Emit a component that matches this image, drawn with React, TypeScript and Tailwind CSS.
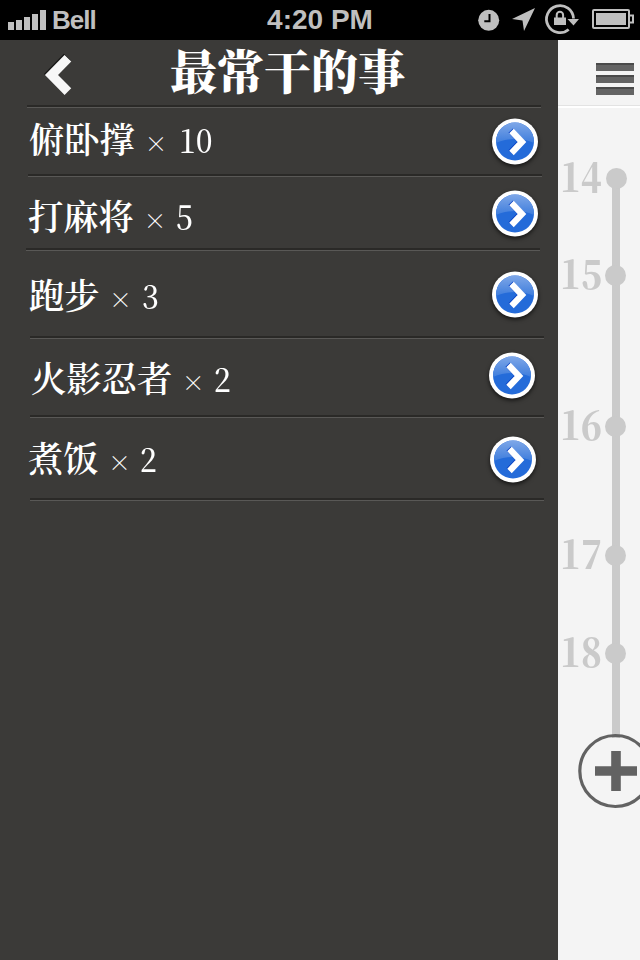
const serif = 'font-["Noto_Serif_CJK_SC","Noto_Serif_SC","Liberation_Serif","Noto_Sans_CJK_SC",serif]';

type Row = {
  name: string;
  count: number;
  row: string;
  label: string;
  num: string;
  button: string;
  line: string;
};

const rows: Row[] = [
  { name: '俯卧撑', count: 10, row: 'h-[69px]', label: 'pl-[29px] mt-[12px]', num: 'ml-[11px]', button: 'mt-[10px] mr-[20px]', line: 'ml-[28px] mr-[16px]' },
  { name: '打麻将', count: 5, row: 'h-[74px]', label: 'pl-[28px] mt-[20px]', num: 'ml-[9px]', button: 'mt-[13px] mr-[20px]', line: 'ml-[26px] mr-[18px]' },
  { name: '跑步', count: 3, row: 'h-[88px]', label: 'pl-[29px] mt-[25px]', num: 'ml-[9px]', button: 'mt-[20px] mr-[20px]', line: 'ml-[30px] mr-[14px]' },
  { name: '火影忍者', count: 2, row: 'h-[79px]', label: 'pl-[31px] mt-[20px]', num: 'ml-[9px]', button: 'mt-[13px] mr-[23px]', line: 'ml-[30px] mr-[14px]' },
  { name: '煮饭', count: 2, row: 'h-[83px]', label: 'pl-[28px] mt-[21px]', num: 'ml-[8px]', button: 'mt-[18px] mr-[22px]', line: 'ml-[30px] mr-[14px]' },
];

const days = [
  { day: 14, place: 'mt-[50px]', dot: 'mr-[13px]' },
  { day: 15, place: 'mt-[57px]', dot: 'mr-[14px]' },
  { day: 16, place: 'mt-[111px]', dot: 'mr-[14px]' },
  { day: 17, place: 'mt-[89px]', dot: 'mr-[14px]' },
  { day: 18, place: 'mt-[58px]', dot: 'mr-[14px]' },
];

function Groove({ className }: { className: string }) {
  return <div className={`h-[3px] shrink-0 border-b border-[#595856] bg-[#2a2927] ${className}`} />;
}

function StatusBar() {
  return (
    <header className='grid h-10 w-full shrink-0 grid-cols-3 items-center bg-black font-["Liberation_Sans",sans-serif] text-[28px] font-bold text-[#bfbfbf]'>
      <div className="flex items-center pl-2">
        <svg width="38" height="20" viewBox="0 0 38 20" fill="currentColor">
          <path d="M0 12h6v8H0zM8 10h6v10H8zM16 7h6v13h-6zM24 4h6v16h-6zM32 0h6v20h-6z" />
        </svg>
        <span className="ml-[6px] text-[26px] leading-9 tracking-[-1px]">Bell</span>
      </div>
      <span className="whitespace-nowrap text-center leading-9">4:20 PM</span>
      <div className="flex items-center justify-end pr-[6px]">
        <svg width="158" height="40" viewBox="476 0 158 40" fill="none">
          <circle cx="488.7" cy="20.3" r="10.5" fill="#bfbfbf" />
          <path d="M489.5 14v7.3h-5.2" stroke="#000" strokeWidth="2" />
          <path d="M535 8 524 31l-1.5-10.5L512 19z" fill="#bfbfbf" />
          <path d="M573.5 18.5A13.5 13.5 0 1 0 568.7 29.5" stroke="#bfbfbf" strokeWidth="2.8" />
          <path d="M567.5 19h11.5l-5.5 6.5z" fill="#bfbfbf" />
          <path d="M554 17.5h12V25h-12z" fill="#bfbfbf" />
          <path d="M556.7 18v-3a3.2 3.2 0 0 1 6.4 0v3" stroke="#bfbfbf" strokeWidth="2" />
          <rect x="593" y="10" width="36" height="18" rx="1" stroke="#bfbfbf" strokeWidth="2" />
          <path d="M596 13h30v12h-30z" fill="#bfbfbf" />
          <path d="M630 15.5h3v7h-3" stroke="#bfbfbf" strokeWidth="2" />
        </svg>
      </div>
    </header>
  );
}

function DetailButton() {
  return (
    <button className="size-[46px] shrink-0">
      <svg className="block overflow-visible drop-shadow-[0_2px_2px_rgba(0,0,0,0.65)]" width="46" height="47" viewBox="0 0 46 47">
        <defs>
          <linearGradient id="gloss" x1="0" y1="4" x2="0" y2="26" gradientUnits="userSpaceOnUse">
            <stop offset="0" stopColor="#80a8e8" />
            <stop offset="1" stopColor="#3b7bdc" />
          </linearGradient>
          <clipPath id="disc">
            <circle cx="23" cy="23.5" r="19" />
          </clipPath>
        </defs>
        <circle cx="23" cy="23.5" r="23" fill="#fff" />
        <g clipPath="url(#disc)">
          <path d="M0 0h46v47H0z" fill="#246bd9" />
          <path d="M0 0h46v27Q36 21 23 21T0 27z" fill="url(#gloss)" />
        </g>
        <path d="m18.7 12.6 10.5 10.9-10.5 10.9" fill="none" stroke="#0a43c5" strokeWidth="6.2" />
        <path d="M19.5 13 30 24 19.5 35" fill="none" stroke="#fff" strokeWidth="6.2" />
      </svg>
    </button>
  );
}

function FrequentPanel() {
  return (
    <main className={`flex w-[558px] shrink-0 flex-col bg-[#3b3a38] text-white ${serif}`}>
      <div className="flex h-[65px] shrink-0 items-start">
        <button className="ml-[44px] mt-[13px]">
          <svg className="block" width="30" height="44" viewBox="44 53 30 44" fill="none">
            <path d="M67.3 57 50.7 74 67.3 91" stroke="#181817" strokeWidth="9.6" />
            <path d="M67.9 58.2 51.5 75 67.9 91.6" stroke="#f7f7f7" strokeWidth="9.4" />
          </svg>
        </button>
        <h1 className="ml-[96px] mt-[5px] whitespace-nowrap text-[47px] font-black leading-[47px]">最常干的事</h1>
      </div>
      <Groove className="ml-[27px] mr-[17px]" />
      <ul>
        {rows.map((r) => (
          <li key={r.name} className={`flex flex-col ${r.row}`}>
            <div className="flex min-h-0 flex-1 items-start">
              <div className={`flex flex-1 items-baseline whitespace-nowrap text-[35.3px] font-semibold leading-9 ${r.label}`}>
                <span>{r.name}</span>
                <span className="ml-[9px] w-[24px] -translate-y-px text-center text-[23px] font-light">×</span>
                <span className={`origin-left scale-x-[0.88] text-[34px] font-medium ${r.num}`}>{r.count}</span>
              </div>
              <div className={r.button}>
                <DetailButton />
              </div>
            </div>
            <Groove className={r.line} />
          </li>
        ))}
      </ul>
    </main>
  );
}

function Timeline() {
  return (
    <aside className="relative flex min-w-0 flex-1 flex-col overflow-hidden bg-[#f4f4f4]">
      <div className="absolute left-[54px] top-[138px] h-[560px] w-2 bg-[#cacaca]" />
      <div className="flex h-[68px] shrink-0 flex-col items-end gap-1 border-b-2 border-white pr-[6px] pt-[23px] shadow-[inset_0_-1px_0_#e3e3e3]">
        <i className="h-2 w-[38px] border-t-2 border-[#4a4a4a] bg-[#646464]" />
        <i className="h-2 w-[38px] border-t-2 border-[#4a4a4a] bg-[#646464]" />
        <i className="h-2 w-[38px] border-t-2 border-[#4a4a4a] bg-[#646464]" />
      </div>
      {days.map((d) => (
        <div key={d.day} className={`relative flex h-10 shrink-0 items-center justify-between ${d.place}`}>
          <span className={`-mt-[6px] ml-[2px] w-[44px] origin-left scale-x-[0.86] text-[40px] font-black leading-10 text-[#cacaca] ${serif}`}>{d.day}</span>
          <i className={`-ml-2 size-[21px] shrink-0 rounded-full bg-[#cacaca] ${d.dot}`} />
        </div>
      ))}
      <button className="relative mt-[60px]">
        <svg className="block" width="82" height="76" viewBox="558 733 82 76" fill="none">
          <circle cx="615.3" cy="771" r="35.5" stroke="#626262" strokeWidth="3.2" />
          <path d="M595 771h42M616 751v40" stroke="#626262" strokeWidth="9.6" />
        </svg>
      </button>
    </aside>
  );
}

export default function App() {
  return (
    <div className="flex h-[960px] w-[640px] flex-col overflow-hidden bg-[#3b3a38]">
      <StatusBar />
      <div className="flex min-h-0 flex-1">
        <FrequentPanel />
        <Timeline />
      </div>
    </div>
  );
}
